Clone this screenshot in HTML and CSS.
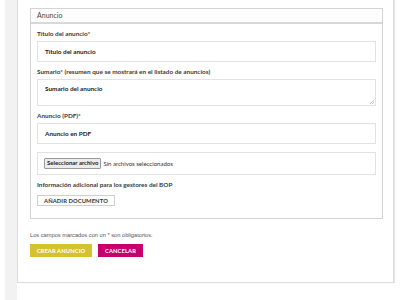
FILE: index.html
```html
<!DOCTYPE html>
<html lang="es">
<head>
<meta charset="utf-8">
<title>Anuncio</title>
<link rel="stylesheet" href="styles.css">
</head>
<body>
<div class="page">
  <div class="gutter"></div>
  <div class="rail"></div>
  <div class="card">
    <div class="fieldset">
      <div class="legend">Anuncio</div>
      <div class="body">
        <div class="label">Título del anuncio*</div>
        <div class="input">Título del anuncio</div>
        <div class="label">Sumario* (resumen que se mostrará en el listado de anuncios)</div>
        <div class="input textarea">Sumario del anuncio
          <svg class="grip" width="5" height="5" viewBox="0 0 5 5"><path d="M1 5L5 1M3 5L5 3" stroke="#aaa" stroke-width="0.7"/></svg>
        </div>
        <div class="label">Anuncio (PDF)*</div>
        <div class="input">Anuncio en PDF</div>
        <div class="filebox"><span class="filebtn">Seleccionar archivo</span><span class="filetxt">Sin archivos seleccionados</span></div>
        <div class="label label-last">Información adicional para los gestores del BOP</div>
        <div class="addbtn">AÑADIR DOCUMENTO</div>
      </div>
    </div>
    <div class="note">Los campos marcados con un * son obligatorios.</div>
    <div class="actions">
      <span class="btn btn-create">CREAR ANUNCIO</span>
      <span class="btn btn-cancel">CANCELAR</span>
    </div>
  </div>
</div>
</body>
</html>
```
FILE: styles.css
```css
html, body { margin: 0; padding: 0; background: #fff; }
body { width: 400px; height: 300px; overflow: hidden; font-family: "Lato", "Liberation Sans", sans-serif; color: #333; }
.page { display: flex; height: 300px; }
.gutter { width: 5px; flex: none; }
.rail { width: 12px; flex: none; background: #f2f2f2; }
.card {
  width: 377px; flex: none;
  border: 1px solid #dcdcdc; border-top: none;
  box-shadow: 1px 0 1px #e4e4e4;
  padding: 8px 10px 0 12px;
  box-sizing: border-box; height: 283px;
}
.fieldset { border: 1px solid #d4d4d4; width: 353px; box-sizing: border-box; }
.legend {
  height: 13px; line-height: 13px; padding-left: 6px;
  font-size: 7px; color: #444; border-bottom: 2px solid #d8d8d8; background: #fdfdfd;
}
.body { padding: 0 6px 12px 6px; }
.label { font-size: 6.4px; font-weight: 700; line-height: 10px; margin: 5px 0 2px; color: #3a3a3a; }
.label-last { margin-bottom: 5px; }
.input {
  height: 21px; box-sizing: border-box; border: 1px solid #e2e2e2;
  font-size: 6.4px; font-weight: 700; color: #222; padding-left: 7px; line-height: 19px;
  position: relative;
}
.textarea { height: 27px; line-height: 17px; }
.grip { position: absolute; right: 1px; bottom: 1px; }
.filebox {
  margin-top: 8px; height: 23px; box-sizing: border-box; border: 1px solid #e2e2e2;
  display: flex; align-items: center; padding-left: 6px;
  font-family: "Lato", sans-serif; font-size: 6px;
}
.filebtn {
  background: #ececec; border: 1px solid #9a9a9a; border-radius: 1px;
  padding: 0 2px; height: 9px; line-height: 8px; font-weight: 700; color: #222; font-size: 6px;
}
.filetxt { margin-left: 2px; color: #333; }
.addbtn {
  display: block; width: max-content; height: 11px; line-height: 10px; box-sizing: border-box;
  border: 1px solid #cfcfcf; padding: 0 6px; font-size: 5.8px; font-weight: 700; color: #333;
  letter-spacing: 0.1px;
}
.note {
  margin-top: 11px; line-height: 10px; font-family: "Liberation Sans", sans-serif;
  font-size: 5.7px; color: #555;
}
.actions { display: flex; gap: 6px; margin-top: 4px; }
.btn {
  height: 13px; line-height: 13px; font-size: 5.8px; font-weight: 700; color: #fff;
  text-align: center; box-sizing: border-box; letter-spacing: 0.1px;
}
.btn-create { background: #d6c130; width: 62px; }
.btn-cancel { background: #c6006d; width: 45px; }
```
